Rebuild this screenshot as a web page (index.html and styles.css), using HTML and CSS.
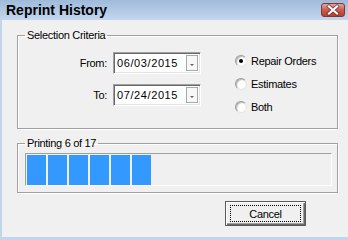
FILE: index.html
```html
<!DOCTYPE html>
<html lang="en">
<head>
  <meta charset="UTF-8" />
  <title>Reprint History</title>
  <link rel="stylesheet" href="styles.css">
</head>
<body>
  <div class="window">
    <div class="titlebar">
      <span class="title">Reprint History</span>
      <span class="close-btn">
        <svg width="24" height="14" viewBox="0 0 24 14">
          <path d="M8 3.5 L16 10.5 M16 3.5 L8 10.5" stroke="#5a2520" stroke-width="4" stroke-linecap="square" opacity="0.6"/>
          <path d="M8 3.5 L16 10.5 M16 3.5 L8 10.5" stroke="#fff" stroke-width="2.2" stroke-linecap="square"/>
        </svg>
      </span>
    </div>

    <div class="client">
      <fieldset class="group criteria">
        <legend>Selection Criteria</legend>
        <div class="criteria-body">
          <div class="dates">
            <label>From:</label>
            <div class="combo">
              <span class="combo-text">06/03/2015</span>
              <span class="combo-btn"><span class="arrow"></span></span>
            </div>
            <label>To:</label>
            <div class="combo">
              <span class="combo-text">07/24/2015</span>
              <span class="combo-btn"><span class="arrow"></span></span>
            </div>
          </div>
          <div class="radios">
            <div class="radio-row"><span class="radio checked"></span>Repair Orders</div>
            <div class="radio-row"><span class="radio"></span>Estimates</div>
            <div class="radio-row"><span class="radio"></span>Both</div>
          </div>
        </div>
      </fieldset>

      <fieldset class="group status">
        <legend>Printing 6 of 17</legend>
        <div class="progress">
          <span class="block"></span>
          <span class="block"></span>
          <span class="block"></span>
          <span class="block"></span>
          <span class="block"></span>
          <span class="block"></span>
        </div>
      </fieldset>

      <div class="actions">
        <button class="btn"><span class="focus">Cancel</span></button>
      </div>
    </div>
  </div>
</body>
</html>
```

FILE: styles.css
```css
/* Base */
body {
  margin: 0;
  font-family: "Liberation Sans", Arial, sans-serif;
  font-size: 11px;
  color: #000;
}

/* Window frame */
.window {
  width: 348px;
  height: 240px;
  background-color: #c1d5ec;
  overflow: hidden;
}

.titlebar {
  height: 20px;
  display: flex;
  align-items: center;
  padding-left: 6px;
  background: linear-gradient(to bottom, #9fbadb, #c3d7ed);
}

.title {
  font-size: 14px;
  font-weight: bold;
}

.close-btn {
  margin-left: auto;
  margin-right: 3px;
  width: 24px;
  height: 14px;
  border: 1px solid #7d3a33;
  border-radius: 3px;
  box-sizing: border-box;
  background: linear-gradient(to bottom, #e3a79e, #cc5b4f 50%, #b7402f);
  display: flex;
  align-items: center;
  justify-content: center;
}

.close-btn svg {
  display: block;
  margin: -1px;
}

/* Client area */
.client {
  margin-left: 2px;
  height: 217px;
  background-color: #f0f0f0;
  padding-top: 9px;
  box-sizing: border-box;
  letter-spacing: -0.3px;
}

/* Group boxes */
.group {
  margin: 0 10px 0 15px;
  padding: 0;
  border: 1px solid #a0a0a0;
  box-shadow: inset 1px 1px #fff, 1px 1px #fff;
  min-inline-size: 0;
}

.group legend {
  margin-left: 7px;
  padding: 0 2px;
  line-height: 13px;
}

.criteria {
  padding-bottom: 15px;
}

.criteria-body {
  display: flex;
  align-items: flex-start;
}

/* Dates */
.dates {
  margin-top: 10px;
  display: grid;
  grid-template-columns: 89px 88px;
  column-gap: 6px;
  row-gap: 10px;
  align-items: center;
}

.dates label {
  text-align: right;
}

.combo {
  height: 22px;
  box-sizing: border-box;
  display: flex;
  background-color: #fff;
  border-style: solid;
  border-width: 1px;
  border-color: #a0a0a0 #fff #fff #a0a0a0;
  box-shadow: inset 1px 1px #696969, inset -1px -1px #e3e3e3;
  padding: 2px;
}

.combo-text {
  flex: 1;
  padding-left: 1px;
  letter-spacing: 0.6px;
  line-height: 16px;
}

.combo-btn {
  width: 12px;
  box-sizing: border-box;
  border: 1px solid #a9a9a9;
  background-color: #f7f7f7;
  display: flex;
  align-items: center;
  justify-content: center;
}

.arrow {
  width: 0;
  height: 0;
  margin-top: 3px;
  border-left: 2px solid transparent;
  border-right: 2px solid transparent;
  border-top: 2px solid #606060;
}

/* Radios */
.radios {
  margin-top: 13px;
  margin-left: 34px;
  display: flex;
  flex-direction: column;
  gap: 11px;
}

.radio-row {
  display: flex;
  align-items: center;
  height: 12px;
  white-space: nowrap;
}

.radio {
  width: 12px;
  height: 12px;
  margin-right: 4px;
  box-sizing: border-box;
  border-radius: 50%;
  border: 1px solid;
  border-color: #9a9a9a #e6e6e6 #e6e6e6 #9a9a9a;
  background: radial-gradient(circle at 60% 60%, #fff 45%, #e8e8e8 100%);
  box-shadow: inset 1px 1px 1px #b8b8b8;
  display: flex;
  align-items: center;
  justify-content: center;
}

.radio.checked::after {
  content: "";
  width: 4px;
  height: 4px;
  border-radius: 50%;
  background-color: #000;
}

/* Progress group */
.status {
  margin-top: 8px;
  padding-bottom: 6px;
}

.progress {
  margin: 3px 5px 0 7px;
  height: 33px;
  box-sizing: border-box;
  border-style: solid;
  border-width: 1px;
  border-color: #a0a0a0 #fff #fff #a0a0a0;
  padding: 1px 1px 0 1px;
  display: flex;
  gap: 2px;
}

.block {
  width: 19px;
  background-color: #3399ff;
}

/* Buttons */
.actions {
  margin-top: 8px;
  display: flex;
  justify-content: flex-end;
  padding-right: 42px;
}

.btn {
  width: 81px;
  height: 25px;
  padding: 3px 4px;
  box-sizing: border-box;
  font-family: inherit;
  font-size: 11px;
  letter-spacing: -0.3px;
  color: #000;
  background-color: #f0f0f0;
  border: 1px solid #5a5a5a;
  box-shadow: inset 1px 1px #fff, inset -1px -1px #696969, inset -2px -2px #a0a0a0;
  display: flex;
}

.btn .focus {
  flex: 1;
  display: flex;
  align-items: center;
  justify-content: center;
  border: 1px dotted #000;
}
```
